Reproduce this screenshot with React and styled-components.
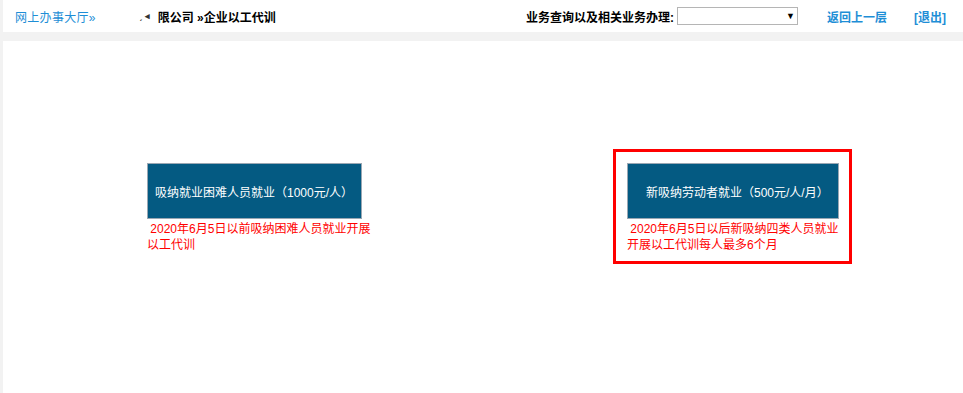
import React from "react";
import styled, { createGlobalStyle } from "styled-components";

const GlobalStyle = createGlobalStyle`
  html, body {
    margin: 0;
    padding: 0;
    background: #f2f2f2;
    font-family: "Liberation Sans", "Noto Sans CJK SC", sans-serif;
    font-size: 12px;
  }
`;

const Page = styled.div`
  padding-left: 3px;
  min-height: 393px;
  display: flex;
  flex-direction: column;
  gap: 9px;
`;

const Header = styled.header`
  height: 32px;
  background: #fff;
  display: flex;
  align-items: center;
  padding: 0 17px 0 12px;
`;

const Crumbs = styled.div`
  display: flex;
  align-items: center;
  font-weight: bold;
  color: #000;
  white-space: nowrap;
`;

const CrumbLink = styled.a`
  color: #1e8ed6;
  text-decoration: none;
  font-weight: normal;
  letter-spacing: 0.3px;
`;

const Hidden = styled.span`
  display: inline-block;
  width: 54px;
  text-align: right;
  color: #333;
  font-size: 9px;
  padding-right: 8px;
`;

const Tools = styled.div`
  margin-left: auto;
  display: flex;
  align-items: center;
  font-weight: bold;
`;

const Label = styled.span`
  color: #000;
  margin-right: 3px;
`;

const Select = styled.div`
  width: 117px;
  height: 16px;
  border: 1px solid #b5b5b5;
  background: #fff;
  display: flex;
  align-items: center;
  justify-content: flex-end;
  padding-right: 2px;
  font-size: 9px;
  color: #000;
  margin-right: 29px;
`;

const ToolLink = styled.a`
  color: #1e8ed6;
  text-decoration: none;
  margin-left: ${(p) => p.$gap || 0}px;
`;

const Content = styled.main`
  flex: 1;
  background: #fff;
  display: flex;
  align-items: flex-start;
  padding: 108px 0 0 130px;
  gap: 222px;
`;

const Card = styled.div`
  width: ${(p) => p.$width}px;
  border: 3px solid ${(p) => (p.$active ? "#ff0000" : "transparent")};
  padding: 11px 10px 8px 11px;
`;

const Button = styled.div`
  width: ${(p) => p.$width}px;
  height: 54px;
  box-sizing: content-box;
  background: #045a82;
  border: 1px solid #9aa7b3;
  color: #fff;
  display: flex;
  align-items: center;
  padding-left: ${(p) => p.$indent}px;
  white-space: nowrap;
`;

const Note = styled.p`
  margin: 2px 0 0;
  color: #ff0000;
  line-height: 16px;
`;

export default function App() {
  return (
    <>
      <GlobalStyle />
      <Page>
        <Header>
          <Crumbs>
            <CrumbLink href="#">网上办事大厅»</CrumbLink>
            <Hidden>ˏ ◂</Hidden>
            限公司 »企业以工代训
          </Crumbs>
          <Tools>
            <Label>业务查询以及相关业务办理:</Label>
            <Select>▼</Select>
            <ToolLink href="#">返回上一层</ToolLink>
            <ToolLink href="#" $gap={27}>[退出]</ToolLink>
          </Tools>
        </Header>
        <Content>
          <Card $width={231}>
            <Button $width={206} $indent={7}>吸纳就业困难人员就业（1000元/人）</Button>
            <Note>&nbsp;2020年6月5日以前吸纳困难人员就业开展以工代训</Note>
          </Card>
          <Card $width={212} $active>
            <Button $width={192} $indent={18}>新吸纳劳动者就业（500元/人/月）</Button>
            <Note>&nbsp;2020年6月5日以后新吸纳四类人员就业开展以工代训每人最多6个月</Note>
          </Card>
        </Content>
      </Page>
    </>
  );
}
